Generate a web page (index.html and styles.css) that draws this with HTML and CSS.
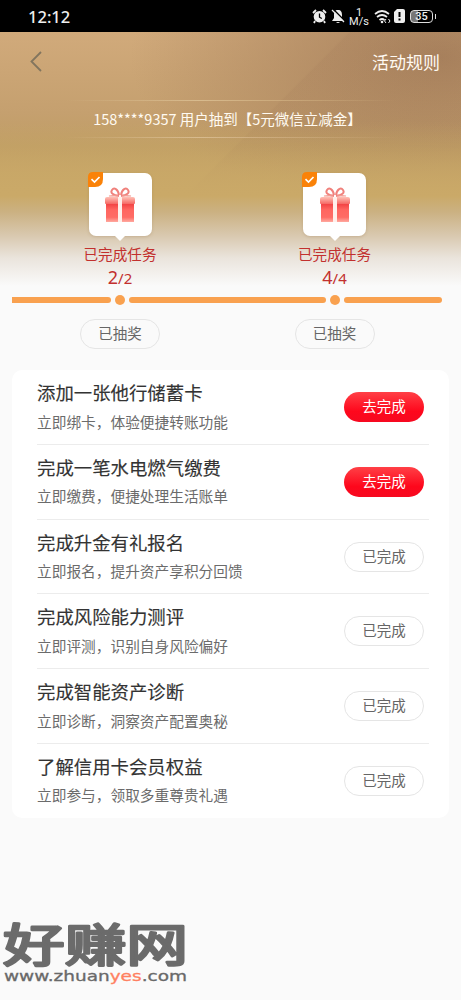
FILE: index.html
```html
<!DOCTYPE html>
<html lang="zh-CN">
<head>
<meta charset="utf-8">
<meta name="viewport" content="width=device-width">
<title>活动任务</title>
<link rel="stylesheet" href="styles.css">
</head>
<body>
<svg class="defs" width="0" height="0" aria-hidden="true">
  <defs>
    <linearGradient id="lid" x1="0" y1="0" x2="0" y2="1"><stop offset="0" stop-color="#ffc0b5"/><stop offset="1" stop-color="#f56863"/></linearGradient>
    <linearGradient id="box" x1="0" y1="0" x2="0" y2="1"><stop offset="0" stop-color="#f03d3f"/><stop offset=".35" stop-color="#ff6660"/><stop offset=".75" stop-color="#ff6c65"/><stop offset="1" stop-color="#ffaaa0"/></linearGradient>
    <symbol id="gift" viewBox="0 0 30 36">
      <path d="M14 9C8 8 5 6 7 3c2-3 6-1 7 5M16 9c6-1 9-3 7-6s-6-1-7 5" fill="none" stroke="#f0817c" stroke-width="2"/>
      <path d="M13 8 4 9l8 1M17 8l9 1-8 1" fill="none" stroke="#f39c94" stroke-width="1.2"/>
      <path d="M1 16h28v19H1z" fill="url(#box)"/>
      <path d="M2 10h26q2 0 2 2v4q0 1-1 1H1q-1 0-1-1v-4q0-2 2-2z" fill="url(#lid)"/>
      <path d="M13 10h4v25h-4z" fill="#fff0eb"/>
    </symbol>
    <symbol id="check" viewBox="0 0 15 15">
      <path d="M5 0h10v7q0 8-8 8H0V5q0-5 5-5z" fill="#fa8208"/>
      <path d="m3.5 7.2 3 2.8 5-5" fill="none" stroke="#fff" stroke-width="1.7"/>
    </symbol>
  </defs>
</svg>
<div class="status">
  <span class="clock">12:12</span>
  <div class="indicators">
    <svg class="alarm" width="15" height="15" viewBox="0 0 15 15"><circle cx="7.5" cy="7.7" r="5.8" fill="#eee"/><path d="M1 4 4 1M11 1l3 3M3 12l-1 2M12 12l1 2" stroke="#eee" stroke-width="1.8"/><path d="M7.5 4.5v3.7l2.3 1.3" fill="none" stroke="#000" stroke-width="1.3"/></svg>
    <svg class="mute" width="14" height="15" viewBox="0 0 14 15"><path d="M7 1c3 0 4 2 4 5v3l2 3H1l2-3V6c0-3 1-5 4-5zM5 13h4q-2 2-4 0z" fill="#eee"/><path d="m2 0 12 12" stroke="#000" stroke-width="1.5"/><path d="m1 1 12 12" stroke="#eee" stroke-width="1.3"/></svg>
    <div class="speed"><span>1</span><span>M/s</span></div>
    <svg class="wifi" width="17" height="15" viewBox="0 0 17 15"><path d="M1 5q7-6 14 0M3 8q5-4 10 0M5.500 11q2.500-2 5 0" fill="none" stroke="#eee" stroke-width="1.7"/><circle cx="8" cy="13" r="1.3" fill="#eee"/><path d="m12 10-1.500 2 1.500 2M14.500 10l1.500 2-1.500 2" fill="none" stroke="#eee"/></svg>
    <svg class="sim" width="11" height="14" viewBox="0 0 11 14"><path d="M3 0h6q2 0 2 2v10q0 2-2 2H2q-2 0-2-2V3z" fill="#eee"/><path d="M5.500 3v5M5.500 9.500v2" stroke="#000" stroke-width="2"/></svg>
    <div class="battery"><span>35</span></div>
  </div>
</div>
<header class="hero">
  <nav class="nav">
    <svg width="12" height="21" viewBox="0 0 12 21"><path d="M11 1 1.500 10.500 11 20" fill="none" stroke="#82755e" stroke-width="1.8"/></svg>
    <span>活动规则</span>
  </nav>
  <div class="notice"><span>158****9357 用户抽到【5元微信立减金】</span></div>
  <div class="stages">
    <div class="stage">
      <div class="prize"><svg class="gift" width="30" height="36"><use href="#gift"/></svg><svg class="check" width="15" height="15"><use href="#check"/></svg></div>
      <p class="done">已完成任务</p><p class="count">2<small>/2</small></p>
    </div>
    <div class="stage">
      <div class="prize"><svg class="gift" width="30" height="36"><use href="#gift"/></svg><svg class="check" width="15" height="15"><use href="#check"/></svg></div>
      <p class="done">已完成任务</p><p class="count">4<small>/4</small></p>
    </div>
  </div>
</header>
<div class="track"><i class="seg first"></i><i class="dot"></i><i class="seg middle"></i><i class="dot"></i><i class="seg last"></i></div>
<div class="draws"><span class="pill">已抽奖</span><span class="pill">已抽奖</span></div>
<main class="card">
  <section class="task"><div><h2>添加一张他行储蓄卡</h2><p>立即绑卡，体验便捷转账功能</p></div><span class="pill go">去完成</span></section>
  <section class="task"><div><h2>完成一笔水电燃气缴费</h2><p>立即缴费，便捷处理生活账单</p></div><span class="pill go">去完成</span></section>
  <section class="task"><div><h2>完成升金有礼报名</h2><p>立即报名，提升资产享积分回馈</p></div><span class="pill">已完成</span></section>
  <section class="task"><div><h2>完成风险能力测评</h2><p>立即评测，识别自身风险偏好</p></div><span class="pill">已完成</span></section>
  <section class="task"><div><h2>完成智能资产诊断</h2><p>立即诊断，洞察资产配置奥秘</p></div><span class="pill">已完成</span></section>
  <section class="task"><div><h2>了解信用卡会员权益</h2><p>立即参与，领取多重尊贵礼遇</p></div><span class="pill">已完成</span></section>
</main>
<footer class="brand">
  <svg width="190" height="100" viewBox="0 0 190 100">
    <text class="brand-name" transform="translate(3 71.500) scale(1 .73)" textLength="185" lengthAdjust="spacingAndGlyphs">好赚网</text>
    <text class="brand-url" x="4" y="91" textLength="183" lengthAdjust="spacingAndGlyphs">www.zhuan<tspan class="accent">yes</tspan>.com</text>
  </svg>
</footer>
</body>
</html>
```
FILE: styles.css
```css
* { box-sizing: border-box; }
body { margin: 0; width: 461px; height: 1000px; overflow: hidden; background: #fafafa; font-family: "Noto Sans CJK SC", sans-serif; color: #333; }
h2, p { margin: 0; font-weight: 400; }
svg { display: block; flex: none; }
.defs { position: absolute; }
.status { height: 32px; background: #000; color: #eee; display: flex; justify-content: space-between; align-items: center; padding: 0 28px; }
.clock { font: 500 16.5px/32px "Noto Sans", sans-serif; padding-top: 2px; }
.indicators { display: flex; align-items: center; margin-right: -3px; }
.alarm { margin-right: 1px; }
.mute { margin-left: 3px; }
.speed { width: 18px; margin: 1px 6px 0 5px; display: flex; flex-direction: column; align-items: center; font: 400 11px/9px Roboto, sans-serif; }
.sim { margin: 0 5px 0 3px; }
.battery { position: relative; width: 23px; height: 13px; margin-right: 3px; border: 1.5px solid #ddd; border-radius: 4px; background: linear-gradient(90deg, #777 35%, #000 35%); font: 500 11px/11px Roboto, sans-serif; text-align: center; }
.battery::after { content: ""; position: absolute; right: -4px; top: 3px; width: 1.5px; height: 5px; background: #ddd; }
.hero { height: 265px; background:
  linear-gradient(180deg, transparent 90px, #caa968 164px, #cbb182 180px, #d9c9b0 204px, #eae4dc 226px, #fafafa 254px),
  linear-gradient(135deg, transparent 48%, rgba(139, 98, 72, .08) 48.3%, transparent 80%),
  radial-gradient(ellipse 310px 160px at 440px 25px, rgba(164, 125, 90, .9), transparent),
  linear-gradient(180deg, #d1aa7b, #c5a06f 80px, #bf9d64 115px, #caa968 164px); }
.nav { height: 58px; display: flex; align-items: center; justify-content: space-between; padding: 0 21px 0 30px; color: #fffaf3; font-size: 17px; line-height: 25px; }
.notice { width: 330px; height: 38px; margin: 10px auto 0; padding: 0 6px 2px 0; display: flex; align-items: center; justify-content: center; color: #fffaf1; font-size: 14.5px; white-space: nowrap; border: solid transparent; border-width: 1px 0; border-image: linear-gradient(90deg, transparent, #d8bb8e 40%, #cdac7e 60%, transparent) 1; }
.stages, .draws { display: grid; grid-template-columns: 80px 80px; column-gap: 134.5px; padding-left: 80px; }
.stages { margin-top: 35px; }
.stage { display: flex; flex-direction: column; align-items: center; color: #c2302e; }
.prize { position: relative; width: 63px; height: 63px; border-radius: 7px; background: #fff; box-shadow: 0 1px 3px rgba(141, 105, 58, .25); display: flex; justify-content: center; padding-top: 14px; }
.prize::after { content: ""; position: absolute; left: 26.5px; top: 63px; border: 5px solid transparent; border-top-color: #fff; border-bottom: 0; }
.check { position: absolute; left: -1px; top: -1px; }
.done { margin-top: 7px; font-size: 14.6px; line-height: 22px; }
.count { font: 400 18px/25px "Noto Sans", sans-serif; }
.count small { font-size: 15px; }
.track { height: 10px; margin: -2px 0 0 12px; display: flex; align-items: center; gap: 4px; }
.seg { height: 5.5px; background: #f9a14f; border-radius: 3px; }
.first { width: 99px; border-radius: 0 3px 3px 0; }
.middle { width: 196.5px; }
.last { width: 98px; }
.dot { width: 10px; height: 10px; border-radius: 50%; background: #f9a14f; }
.draws { margin-top: 14px; }
.pill { width: 80px; height: 30px; padding-bottom: 2px; border: 1.5px solid #e5e5e5; border-radius: 15px; display: flex; align-items: center; justify-content: center; color: #666; font-size: 14.5px; line-height: 22px; flex: none; }
.go { border: 0; background: linear-gradient(180deg, #ff4046, #fe071c 65%, #f60920); color: #fff; }
.card { margin: 21px 12px 0; padding: 0 20px 0 25px; height: 448px; background: #fff; border-radius: 10px; }
.task { height: 74.75px; display: flex; justify-content: space-between; padding-right: 5px; border-bottom: 1px solid #ececec; }
.task:last-child { border: 0; }
.task h2 { margin-top: 8px; font-size: 18.4px; line-height: 28px; -webkit-text-stroke: .15px #333; }
.task p { margin-top: 4.5px; font-size: 14.7px; line-height: 22px; color: #6b6b6b; }
.task .pill { margin-top: 22px; }
.brand { margin-top: 72px; }
.brand-name { font-size: 62px; font-weight: 400; fill: #6b6b6b; stroke: #6b6b6b; stroke-width: 3.6px; stroke-linejoin: round; }
.brand-url { font-family: "DejaVu Sans", sans-serif; font-size: 14px; fill: #696969; stroke: #696969; stroke-width: .3px; }
.brand-url .accent { fill: #ff8061; stroke: #ff8061; }
```
